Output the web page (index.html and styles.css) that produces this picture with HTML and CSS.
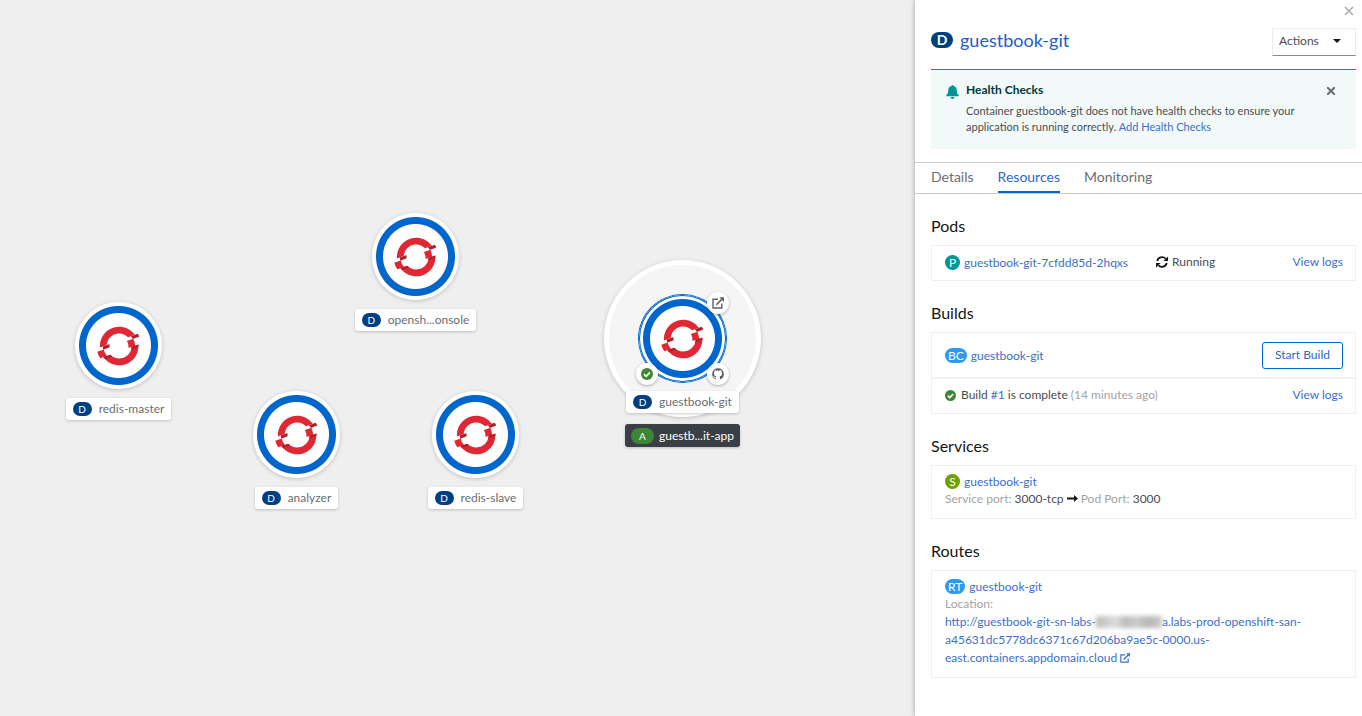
FILE: index.html
```html
<!DOCTYPE html>
<html lang="en">
<head>
<meta charset="utf-8">
<title>Topology</title>
<link rel="stylesheet" href="styles.css">
</head>
<body>
<svg class="defs" aria-hidden="true">
  <symbol id="openshift" viewBox="0 0 62 60">
    <path fill="#e12733" d="M38.802 13.776c2.004.935 3.74 2.21 5.204 3.707l9.633-3.506a27.38 27.38 0 0 0-10.756-8.95c-13.77-6.42-30.198-.442-36.62 13.326a27.38 27.38 0 0 0-2.488 13.771l9.634-3.505c.16-2.087.67-4.18 1.603-6.184 4.173-8.947 14.844-12.83 23.79-8.658M9.153 35.01L0 38.342c.84 3.337 2.3 6.508 4.304 9.33l9.612-3.5a17.99 17.99 0 0 1-4.763-9.164M49.074 31.38a17.64 17.64 0 0 1-1.616 6.186c-4.173 8.947-14.843 12.83-23.79 8.657a17.71 17.71 0 0 1-5.215-3.7l-9.612 3.5c2.662 3.744 6.293 6.874 10.748 8.953 13.77 6.42 30.196.44 36.618-13.328a27.28 27.28 0 0 0 2.479-13.765zM51.445 19.618l-9.153 3.332c1.7 3.046 2.503 6.553 2.24 10.08l9.612-3.497c-.275-3.45-1.195-6.817-2.7-9.915"/>
    <path fill="#ad212b" d="M17.424 27.158L7.8 30.664c.123 1.545.4 3.07.764 4.566l9.15-3.333c-.297-1.547-.403-3.142-.28-4.74M60 16.504c-.672-1.386-1.45-2.726-2.35-3.988l-9.632 3.506c1.12 1.147 2.06 2.435 2.83 3.813zM49.074 31.38l9.612-3.497-.2 3.1-10.2 4.2zM18.453 42.523l-9.612 3.5 2.2 2.7 10.6-3.7z"/>
  </symbol>
  <symbol id="check" viewBox="0 0 12 12">
    <circle cx="6" cy="6" r="6" fill="#3e8635"/>
    <path d="M3 6.2l2.2 2.1L9 4.4" fill="none" stroke="#fff" stroke-width="1.7"/>
  </symbol>
  <symbol id="external" viewBox="0 0 12 12">
    <path d="M6 2.2H1v8.8h8.8V6.5" fill="none" stroke="currentColor" stroke-width="1.4"/>
    <path d="M4.4 7.8l5.4-5.4" fill="none" stroke="currentColor" stroke-width="1.6"/>
    <path d="M7.3.2H12v4.7z" fill="currentColor"/>
  </symbol>
  <symbol id="github" viewBox="0 0 16 16">
    <path fill="currentColor" d="M8 1.5a6.6 6.6 0 0 0-2.3 12.8v-1.6c-1.700.3-2.300-.5-2.700-1.500-.2-.4-.5-.7-.9-.9.900-.3 1.500.2 1.900.8.400.6.9.8 1.700.6.1-.5.3-.8.6-1C4.200 10.300 3.300 9.200 3.300 7.400c0-.8.3-1.500.8-2-.2-.7-.1-1.300.1-1.900.8 0 1.400.4 1.900.8a7 7 0 0 1 3.800 0c.5-.4 1.100-.8 1.900-.8.2.6.3 1.200.1 1.900.5.5.8 1.200.8 2 0 1.800-.9 2.900-3 3.300.4.3.6.8.6 1.500v2.100A6.600 6.600 0 0 0 8 1.500z"/>
  </symbol>
</svg>

<div class="app">
  <main class="canvas" aria-label="Topology">
    <div class="group-ring"></div>
    <div class="node node-console">
      <div class="disc"><svg class="logo"><use href="#openshift"/></svg></div>
      <div class="label"><span class="kind">D</span>opensh...onsole</div>
    </div>
    <div class="node node-master">
      <div class="disc"><svg class="logo"><use href="#openshift"/></svg></div>
      <div class="label"><span class="kind">D</span>redis-master</div>
    </div>
    <div class="node node-analyzer">
      <div class="disc"><svg class="logo"><use href="#openshift"/></svg></div>
      <div class="label"><span class="kind">D</span>analyzer</div>
    </div>
    <div class="node node-slave">
      <div class="disc"><svg class="logo"><use href="#openshift"/></svg></div>
      <div class="label"><span class="kind">D</span>redis-slave</div>
    </div>
    <div class="node node-guestbook">
      <div class="disc selected">
        <svg class="logo"><use href="#openshift"/></svg>
        <a class="decorator deco-open" href="#" aria-label="Open URL"><svg class="i12"><use href="#external"/></svg></a>
        <a class="decorator deco-build" href="#" aria-label="Build complete"><svg class="i12"><use href="#check"/></svg></a>
        <a class="decorator deco-source" href="#" aria-label="Edit source"><svg class="i14"><use href="#github"/></svg></a>
      </div>
      <div class="label"><span class="kind">D</span>guestbook-git</div>
      <div class="label group-label"><span class="kind kind-app">A</span>guestb...it-app</div>
    </div>
  </main>

  <aside class="panel">
    <div class="close-row">
      <button class="icon-button close" aria-label="Close"><svg class="i10" viewBox="0 0 10 10"><path d="M1 1l8 8M9 1L1 9" fill="none" stroke="currentColor" stroke-width="1.6"/></svg></button>
    </div>
    <header class="heading">
      <h1 class="title"><span class="badge badge-title">D</span><a href="#">guestbook-git</a></h1>
      <button class="actions">Actions <svg class="caret" viewBox="0 0 8 4"><path d="M0 0h8L4 4z" fill="currentColor"/></svg></button>
    </header>

    <section class="alert">
      <svg class="bell" viewBox="0 0 14 15"><path fill="#009596" d="M7 0a1 1 0 0 1 1 1c2.300.5 3.600 2.200 3.600 4.500 0 3 .8 4.200 1.900 5.100.7.700.4 1.600-.6 1.600H1.100c-1 0-1.300-.9-.6-1.600 1.100-.9 1.900-2.100 1.900-5.100C2.400 3.200 3.700 1.500 6 1a1 1 0 0 1 1-1zM5 13h4a2 2 0 0 1-4 0z"/></svg>
      <div class="alert-body">
        <h2 class="alert-title">Health Checks</h2>
        <p class="alert-text">Container guestbook-git does not have health checks to ensure your application is running correctly. <a href="#">Add Health Checks</a></p>
      </div>
      <button class="icon-button dismiss" aria-label="Dismiss"><svg class="i8" viewBox="0 0 8 8"><path d="M0 0l8 8M8 0L0 8" fill="none" stroke="currentColor" stroke-width="2"/></svg></button>
    </section>

    <nav class="tabs">
      <a class="tab" href="#">Details</a>
      <a class="tab current" href="#" aria-current="page">Resources</a>
      <a class="tab" href="#">Monitoring</a>
    </nav>

    <div class="resources">
      <section>
        <h2 class="section-title">Pods</h2>
        <div class="card">
          <div class="row pod-row">
            <div class="name"><span class="badge badge-pod">P</span><a href="#">guestbook-git-7cfdd85d-2hqxs</a></div>
            <div class="status"><svg class="i12" viewBox="0 0 12 12"><path d="M1.200 5A5 4.800 0 0 1 9.600 2.600M10.800 7A5 4.800 0 0 1 2.400 9.400" fill="none" stroke="#151515" stroke-width="1.800"/><path d="M12 .5v4.600H7.400zM0 11.500V6.900h4.600z" fill="#151515"/></svg>Running</div>
            <a class="end" href="#">View logs</a>
          </div>
        </div>
      </section>

      <section>
        <h2 class="section-title">Builds</h2>
        <div class="card">
          <div class="row build-row">
            <div class="name"><span class="badge badge-build">BC</span><a href="#">guestbook-git</a></div>
            <button class="start end">Start Build</button>
          </div>
          <div class="row result-row">
            <svg class="i11"><use href="#check"/></svg>
            <div>Build <a href="#">#1</a> is complete <span class="muted">(14 minutes ago)</span></div>
            <a class="end" href="#">View logs</a>
          </div>
        </div>
      </section>

      <section>
        <h2 class="section-title">Services</h2>
        <div class="card padded">
          <div class="name"><span class="badge badge-service">S</span><a href="#">guestbook-git</a></div>
          <div class="meta"><span class="muted">Service port:</span> 3000-tcp <svg class="arrow" viewBox="0 0 11 7"><path d="M0 2.500h7V0l4 3.500L7 7V4.500H0z" fill="#151515"/></svg> <span class="muted">Pod Port:</span> 3000</div>
        </div>
      </section>

      <section>
        <h2 class="section-title">Routes</h2>
        <div class="card padded">
          <div class="name"><span class="badge badge-build">RT</span><a href="#">guestbook-git</a></div>
          <div class="meta muted">Location:</div>
          <a class="url" href="#">http://guestbook-git-sn-labs-<span class="redacted"></span>a.labs-prod-openshift-san-a45631dc5778dc6371c67d206ba9ae5c-0000.us-east.containers.appdomain.cloud&nbsp;<svg class="url-icon"><use href="#external"/></svg></a>
        </div>
      </section>
    </div>
  </aside>
</div>
</body>
</html>
```

FILE: styles.css
```css
* { box-sizing: border-box; }
body {
  margin: 0;
  font: 12px/18px Lato, "Liberation Sans", sans-serif;
  color: #4a4d50;
  background: #fff;
}
h1, h2, p { margin: 0; font-weight: 400; }
a { color: #3a70ca; text-decoration: none; }
button { font: inherit; cursor: pointer; }
svg { flex: none; display: block; }
.defs { position: absolute; width: 0; height: 0; }
.i8 { width: 8px; height: 8px; }
.i10 { width: 10px; height: 10px; }
.i11 { width: 11px; height: 11px; }
.i12 { width: 12px; height: 12px; }
.i14 { width: 14px; height: 14px; }

.app {
  display: grid;
  grid-template-columns: minmax(0, 1fr) 447px;
  min-height: 100vh;
}

/* Topology canvas */
.canvas { position: relative; background: #efefef; overflow: hidden; }
.node {
  position: absolute;
  display: flex;
  flex-direction: column;
  align-items: center;
  width: 129px;
  margin-left: -64px;
}
.node-console { left: 415px; top: 213px; }
.node-master { left: 118px; top: 302px; }
.node-analyzer { left: 296px; top: 391px; }
.node-slave { left: 475px; top: 391px; }
.node-guestbook { left: 682px; top: 295px; }
.disc {
  position: relative;
  display: flex;
  align-items: center;
  justify-content: center;
  width: 87px;
  height: 87px;
  border-radius: 50%;
  background: radial-gradient(circle, #fff 32px, #06c 33px, #06c 39px, #fff 40px);
  box-shadow: 0 1px 4px rgba(3, 3, 3, .2);
}
.disc.selected { box-shadow: inset 0 0 0 1px #06c, 0 0 0 1px #06c; }
.logo { width: 44px; height: 42px; }
.label {
  display: flex;
  align-items: center;
  gap: 7px;
  height: 22px;
  margin-top: 9px;
  padding: 0 7px;
  border-radius: 3px;
  background: #fff;
  color: #6a6e73;
  white-space: nowrap;
  box-shadow: 0 1px 3px rgba(3, 3, 3, .2);
  z-index: 1;
}
.group-label { gap: 5px; height: 23px; margin-top: 11px; padding: 0 6px; background: #393f44; color: #fff; }
.kind {
  width: 19px;
  border-radius: 8px;
  background: #004080;
  color: #fff;
  font-size: 10px;
  line-height: 14px;
  text-align: center;
}
.kind-app { width: 23px; background: #3e8635; line-height: 16px; }
.group-ring {
  position: absolute;
  left: 604px;
  top: 260px;
  width: 157px;
  height: 157px;
  border: 5px solid #fff;
  border-radius: 50%;
  background: #f5f5f5;
  box-shadow: 0 1px 4px rgba(3, 3, 3, .2);
}
.decorator {
  position: absolute;
  display: flex;
  align-items: center;
  justify-content: center;
  width: 22px;
  height: 22px;
  border-radius: 50%;
  background: #fff;
  color: #5c6063;
  box-shadow: 0 1px 3px rgba(3, 3, 3, .3);
}
.deco-open { right: -3px; top: -3px; }
.deco-build { left: -3px; bottom: -3px; }
.deco-source { right: -3px; bottom: -3px; }

/* Side panel */
.panel { position: relative; background: #fff; box-shadow: 0 0 5px rgba(3, 3, 3, .35); }
.close-row { display: flex; justify-content: flex-end; height: 28px; padding: 2px 4px; }
.icon-button {
  display: flex;
  align-items: center;
  justify-content: center;
  width: 18px;
  height: 18px;
  padding: 0;
  border: 0;
  background: none;
}
.close { color: #aaa; }
.heading {
  display: flex;
  align-items: flex-start;
  justify-content: space-between;
  margin: 0 6px 13px 16px;
}
.title {
  display: flex;
  align-items: center;
  gap: 7px;
  font-size: 18px;
  line-height: 24px;
}
.title a { color: #1a60cd; }
.badge {
  display: inline-block;
  min-width: 15px;
  height: 15px;
  padding: 0 3px;
  border-radius: 8px;
  color: #fff;
  line-height: 15px;
  text-align: center;
}
.badge-title { width: 22px; height: 16px; background: #004080; font-size: 14px; font-weight: 700; line-height: 16px; }
.badge-pod { background: #009596; }
.badge-build { background: #2b9af3; }
.badge-service { background: #6ca100; }
.actions {
  display: flex;
  align-items: center;
  justify-content: space-between;
  width: 84px;
  height: 28px;
  padding: 0 14px 2px 6px;
  border: 1px solid #ededed;
  border-bottom-color: #8a8d90;
  background: #fff;
  color: #4a4d50;
}
.caret { width: 8px; height: 4px; color: #151515; }

.alert {
  display: flex;
  align-items: flex-start;
  gap: 7px;
  min-height: 80px;
  margin: 0 6px 13px 16px;
  padding: 12px 16px 12px 15px;
  border-top: 1px solid #009596;
  background: #f2f9f9;
}
.bell { width: 13px; height: 14px; margin-top: 3px; }
.alert-body { flex: 1; }
.alert-title { color: #003737; font-size: 12px; font-weight: 700; line-height: 16px; }
.alert-text { max-width: 340px; margin-top: 5px; font-size: 11px; line-height: 16px; }
.dismiss { color: #6a6e73; }

.tabs {
  display: flex;
  gap: 24px;
  height: 32px;
  padding: 0 16px;
  border-top: 1px solid #ccc;
  border-bottom: 1px solid #ccc;
}
.tab { color: #6a6e73; font-size: 14px; line-height: 28px; }
.tab.current { color: #2b68c8; border-bottom: 2px solid #06c; }

.resources { padding: 0 6px 24px 16px; }
.section-title { margin: 22px 0 9px; color: #151515; font-size: 16px; line-height: 20px; }
.card { border: 1px solid #f0f0f0; }
.padded { padding: 7px 13px 10px; }
.row { display: flex; align-items: center; padding: 0 12px 2px 13px; min-height: 34px; }
.end { margin-left: auto; }
.name { display: flex; align-items: center; gap: 4px; line-height: 17px; }
.name a { line-height: 17px; }
.pod-row .name { width: 211px; }
.status { display: flex; align-items: center; gap: 4px; }
.build-row { min-height: 44px; padding-bottom: 0; }
.result-row { gap: 5px; min-height: 36px; border-top: 2px solid #f2f2f2; }
.start {
  height: 27px;
  padding: 0 12px;
  border: 1px solid #06c;
  border-radius: 3px;
  background: #fff;
  color: #2b68c8;
}
.muted { color: #a3a3a3; }
.arrow { display: inline-block; width: 11px; height: 7px; vertical-align: 1px; }
.url { display: block; line-height: 18px; }
.url-icon { display: inline-block; width: 10px; height: 10px; vertical-align: -1px; }
.redacted {
  display: inline-block;
  width: 66px;
  height: 12px;
  vertical-align: -2px;
  background: linear-gradient(90deg, #bbb, #ddd 30%, #bbb 45%, #ccc 60%, #b5b5b5 80%, #ccc);
  filter: blur(2px);
}
```
